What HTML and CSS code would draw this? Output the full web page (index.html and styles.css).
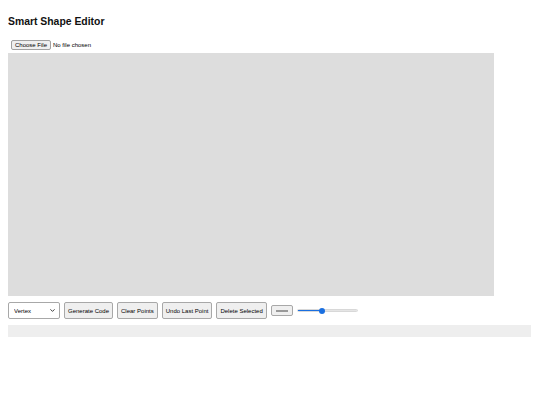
FILE: index.html
```html
<!DOCTYPE html>
<html>
<head>
<meta charset="utf-8">
<title>Smart Shape Editor</title>
<link rel="stylesheet" href="styles.css">
</head>
<body>
<h1 class="title">Smart Shape Editor</h1>
<div class="file-row"><input type="file" class="file-input"></div>
<canvas class="board" width="486" height="243"></canvas>
<div class="controls">
  <span class="select-wrap">
    <select class="mode">
      <option>Vertex</option>
      <option>Edge</option>
    </select>
    <svg class="chevron" viewBox="0 0 8 5" width="5" height="3" aria-hidden="true"><path d="M1 1 L4 4 L7 1" fill="none" stroke="#222" stroke-width="1.4" stroke-linecap="round" stroke-linejoin="round"/></svg>
  </span>
  <button class="btn">Generate Code</button>
  <button class="btn">Clear Points</button>
  <button class="btn">Undo Last Point</button>
  <button class="btn">Delete Selected</button>
  <input type="color" class="color" value="#cccccc">
  <input type="range" class="slider" min="0" max="100" value="40" style="--fill: 40%">
</div>
<div class="output"></div>
</body>
</html>
```

FILE: styles.css
```css
html, body {
  background: #ffffff;
}
body {
  margin: 8px;
  font-family: "Liberation Sans", Arial, Helvetica, sans-serif;
  color: #000;
}
.title {
  font-size: 10.4px;
  font-weight: bold;
  margin: 8px 0 0;
  line-height: 12px;
  color: #111;
}
.file-row {
  margin-top: 10px;
  height: 13px;
  display: flex;
  align-items: center;
}
.file-input {
  font-family: "Liberation Sans", Arial, sans-serif;
  font-size: 6px;
  margin: 0 0 0 3px;
  padding: 0;
}
.file-input::file-selector-button {
  font-family: inherit;
  font-size: 6px;
  padding: 1px 3px;
  margin-right: 2px;
  background: #efefef;
  border: 1px solid #a0a0a0;
  border-radius: 2px;
  height: 10px;
  line-height: 7px;
  color: #000;
}
.board {
  display: block;
  width: 486px;
  height: 243px;
  background: #dddddd;
  margin-top: 2px;
}
.controls {
  display: flex;
  align-items: center;
  gap: 4px;
  margin-top: 6px;
  height: 17px;
}
.select-wrap {
  position: relative;
  display: inline-flex;
}
.mode {
  -webkit-appearance: none;
  appearance: none;
  width: 52px;
  height: 17px;
  font-family: "Liberation Sans", Arial, sans-serif;
  font-size: 6px;
  padding: 0 2px 0 5px;
  background: #fff;
  border: 1px solid #a8a8a8;
  border-radius: 2px;
  color: #000;
}
.chevron {
  position: absolute;
  right: 5px;
  top: 7px;
}
.btn {
  height: 17px;
  font-family: "Liberation Sans", Arial, sans-serif;
  font-size: 6px;
  padding: 0 3px;
  background: #efefef;
  border: 1px solid #a8a8a8;
  border-radius: 2px;
  color: #000;
  white-space: nowrap;
}
.color {
  -webkit-appearance: none;
  appearance: none;
  width: 22px;
  height: 11px;
  padding: 0;
  margin: 0;
  background: #efefef;
  border: 1px solid #a8a8a8;
  border-radius: 2px;
}
.color::-webkit-color-swatch-wrapper {
  padding: 4px 4px;
}
.color::-webkit-color-swatch {
  border: 0.5px solid #999;
  border-radius: 0;
}
.slider {
  -webkit-appearance: none;
  appearance: none;
  width: 61px;
  height: 8px;
  margin: 0;
  background: transparent;
}
.slider::-webkit-slider-runnable-track {
  height: 3px;
  border-radius: 2px;
  background: linear-gradient(to right, #1a6fe0 0, #1a6fe0 var(--fill), #e5e5e5 var(--fill), #e5e5e5 100%);
  border: 0.5px solid #d8d8d8;
}
.slider::-webkit-slider-thumb {
  -webkit-appearance: none;
  appearance: none;
  width: 6px;
  height: 6px;
  border-radius: 50%;
  background: #1a6fe0;
  margin-top: -1.75px;
  border: none;
}
.output {
  margin-top: 6px;
  height: 12px;
  background: #eeeeee;
  width: 523px;
}
```
